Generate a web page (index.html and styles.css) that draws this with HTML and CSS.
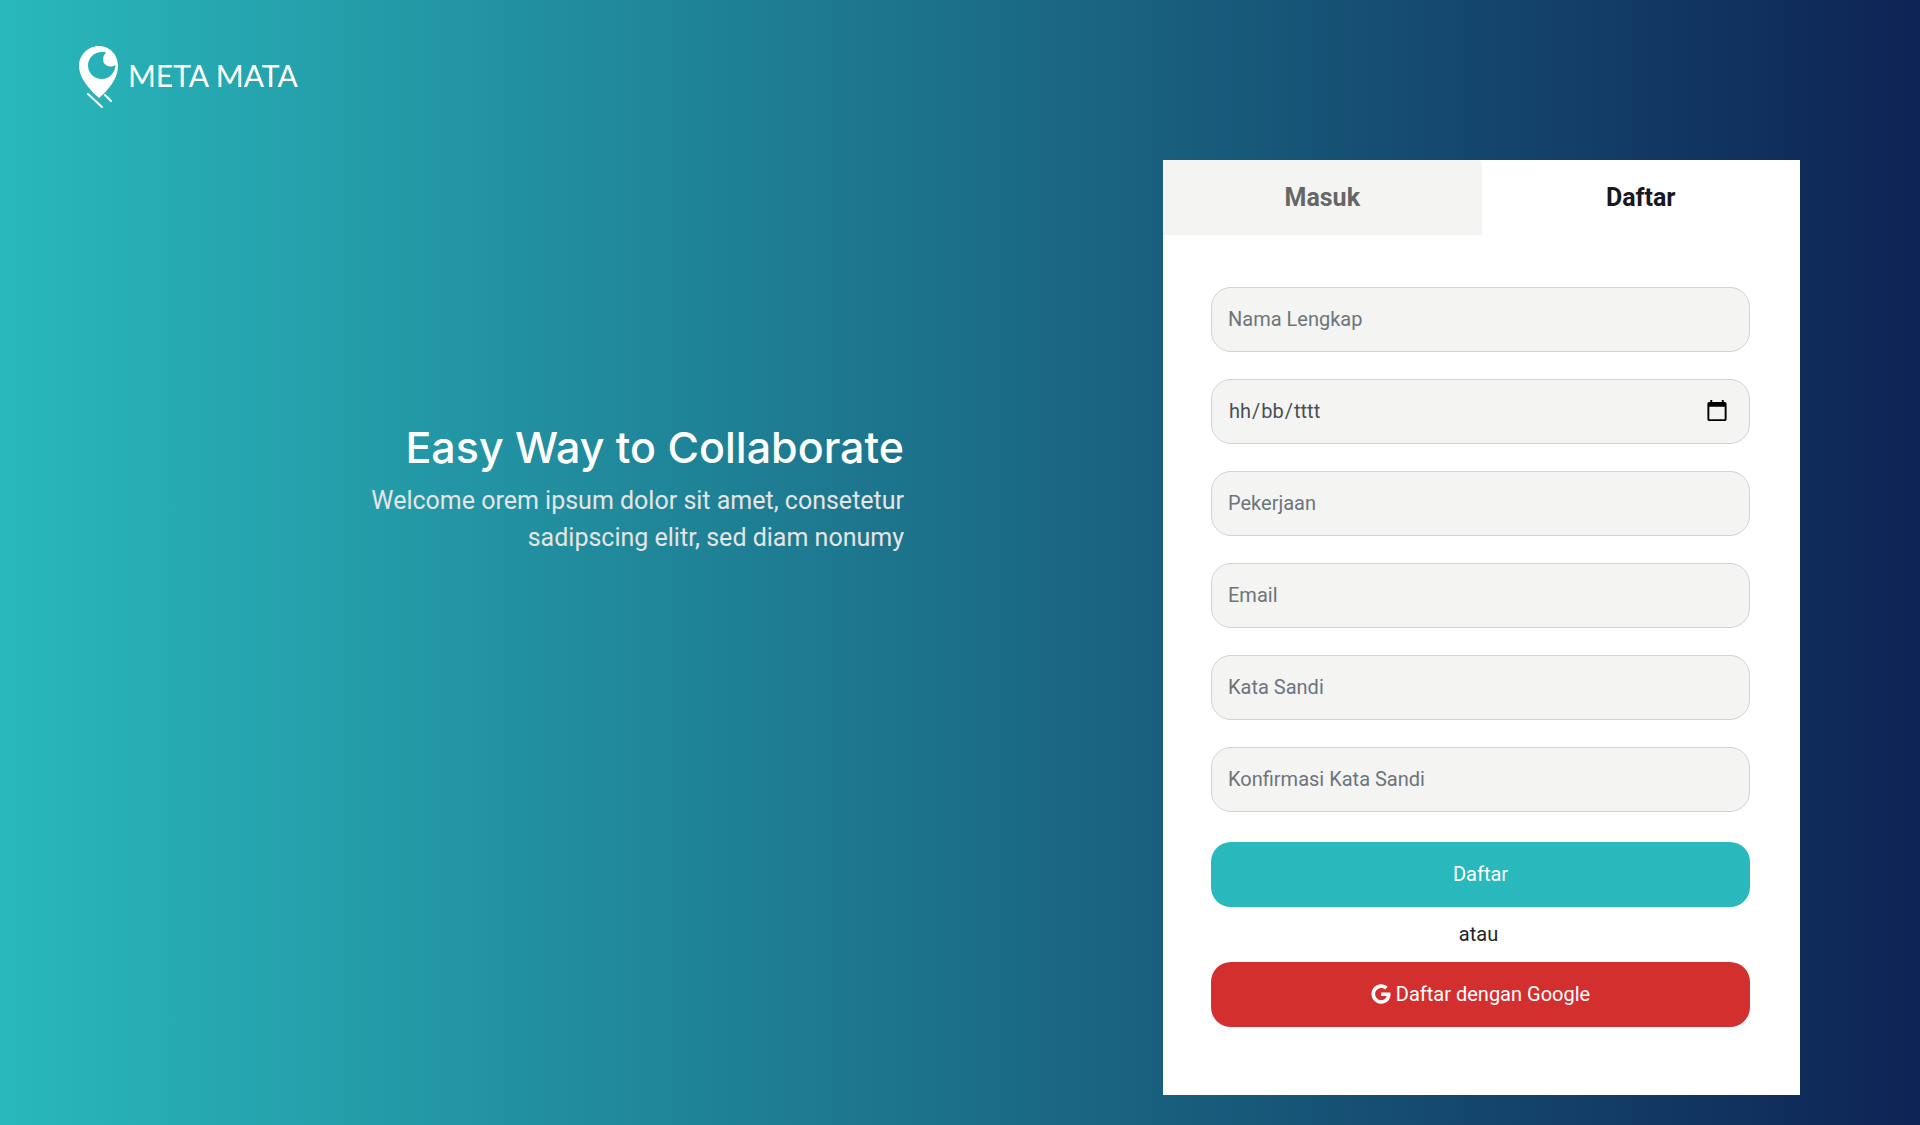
FILE: index.html
```html
<!DOCTYPE html>
<html lang="id">
<head>
<meta charset="utf-8">
<meta name="viewport" content="width=device-width, initial-scale=1">
<title>Meta Mata - Daftar</title>
<link rel="stylesheet" href="styles.css">
</head>
<body>
<header class="header">
  <a class="brand" href="#">
    <svg class="brand-mark" viewBox="0 0 40 63" width="40" height="63" aria-hidden="true">
      <path fill="#fff" fill-rule="evenodd" d="M20 0C9 0 0 9 0 20c0 9 6 17 11 23 4 5 7 7 9 9 2-2 5-4 9-9 5-6 10-14 10-23C39 9 31 0 20 0zM27 6.500C25 9 24 11 24 13.500c0 4 3.500 7 7.500 7 1.500 0 3-.300 5-1.500C36 27 30 33 23 33 15 33 9 27 9 19.500 9 12 15 6 23 6c1.500 0 2.800.100 4 .500z"/>
      <path fill="none" stroke="#fff" stroke-width="2" stroke-linecap="round" d="M9 48l14 13M26 49l6 6"/>
    </svg>
    <span class="brand-name">META MATA</span>
  </a>
</header>
<main class="page">
  <section class="intro">
    <h1 class="intro-title">Easy Way to Collaborate</h1>
    <p class="intro-text">Welcome orem ipsum dolor sit amet, consetetur sadipscing elitr, sed diam nonumy</p>
  </section>
  <section class="card">
    <nav class="tabs">
      <a class="tab" href="#masuk">Masuk</a>
      <a class="tab tab-active" href="#daftar" aria-current="page">Daftar</a>
    </nav>
    <form class="form">
      <input class="field" type="text" placeholder="Nama Lengkap" aria-label="Nama Lengkap">
      <div class="date">
        <input class="field date-input" type="date" id="birth">
        <label class="date-hint" for="birth"><span>hh</span><span>/</span><span>bb</span><span>/</span><span>tttt</span></label>
      </div>
      <input class="field" type="text" placeholder="Pekerjaan" aria-label="Pekerjaan">
      <input class="field" type="email" placeholder="Email" aria-label="Email">
      <input class="field" type="password" placeholder="Kata Sandi" aria-label="Kata Sandi">
      <input class="field" type="password" placeholder="Konfirmasi Kata Sandi" aria-label="Konfirmasi Kata Sandi">
      <div class="actions">
        <button class="button" type="submit">Daftar</button>
        <p class="or">atau</p>
        <button class="button button-google" type="button">
          <svg class="google" viewBox="0 0 488 512" width="20" height="20" aria-hidden="true"><path fill="#fff" d="M488 261.800C488 403.300 391.100 504 248 504 110.800 504 0 393.200 0 256S110.800 8 248 8c66.800 0 123 24.500 166.300 64.900l-67.500 64.900C258.500 52.600 94.300 116.600 94.300 256c0 86.500 69.100 156.600 153.700 156.600 98.200 0 135-70.400 140.800-106.900H248v-85.300h236.100c2.300 12.700 3.900 24.900 3.900 41.400z"/></svg>
          Daftar dengan Google
        </button>
      </div>
    </form>
  </section>
</main>
</body>
</html>
```
FILE: styles.css
```css
* {
  box-sizing: border-box;
}

body {
  margin: 0;
  min-height: 100vh;
  background: linear-gradient(90deg, #29b8bc 0%, #1b6c87 52%, #0e2355 100%);
  color: #212529;
  font: 20px/30px Roboto, "Liberation Sans", sans-serif;
}

.header {
  display: flex;
  height: 160px;
  padding: 46px 79px;
}

.brand {
  display: flex;
  align-items: flex-start;
  gap: 9px;
  color: #fff;
  text-decoration: none;
}

.brand-name {
  font: 400 30px/58px Lato, sans-serif;
}

.page {
  display: grid;
  grid-template-columns: 904px 637px;
  justify-content: space-between;
  padding: 0 120px 30px 0;
}

.intro {
  display: flex;
  flex-direction: column;
  align-items: flex-end;
  padding-top: 263px;
  color: #fff;
  text-align: right;
}

.intro-title {
  margin: 0 0 11px;
  font: 500 43px/48px Inter, sans-serif;
}

.intro-text {
  width: 560px;
  margin: 0;
  color: #e5e5e5;
  font-size: 25px;
  line-height: 37px;
}

.card {
  background: #fff;
}

.tabs {
  display: grid;
  grid-template-columns: 1fr 1fr;
}

.tab {
  padding: 19px;
  background: #f4f4f2;
  border-radius: 0 5px 0 0;
  color: #666;
  font-size: 25px;
  font-weight: 700;
  line-height: 37px;
  text-align: center;
  text-decoration: none;
}

.tab-active {
  background: #fff;
  color: #181824;
}

.form {
  display: grid;
  gap: 27px;
  padding: 52px 50px 68px 48px;
}

.field {
  display: block;
  width: 100%;
  height: 65px;
  padding: 0 16px 2px;
  border: 1px solid #ced4da;
  border-radius: 20px;
  background: #f4f4f2;
  color: #495057;
  font: inherit;
}

.field::placeholder {
  color: #6c757d;
  opacity: 1;
}

.date {
  position: relative;
}

.date-input {
  padding-right: 20px;
}

.date-input::-webkit-datetime-edit {
  opacity: 0;
}

.date-input::-webkit-calendar-picker-indicator {
  width: 24px;
  height: 24px;
  padding: 0;
}

.date-hint {
  position: absolute;
  top: 17px;
  left: 18px;
  display: flex;
  gap: 1px;
  color: #495057;
  pointer-events: none;
}

.actions {
  padding-top: 3px;
}

.button {
  display: flex;
  align-items: center;
  justify-content: center;
  gap: 5px;
  width: 100%;
  height: 65px;
  padding: 0 0 2px;
  border: 0;
  border-radius: 20px;
  background: #29b8bc;
  color: #fff;
  font: inherit;
}

.button-google {
  background: #d32f2f;
}

.or {
  margin: 0;
  padding: 12px 4px 13px 0;
  text-align: center;
}
```
